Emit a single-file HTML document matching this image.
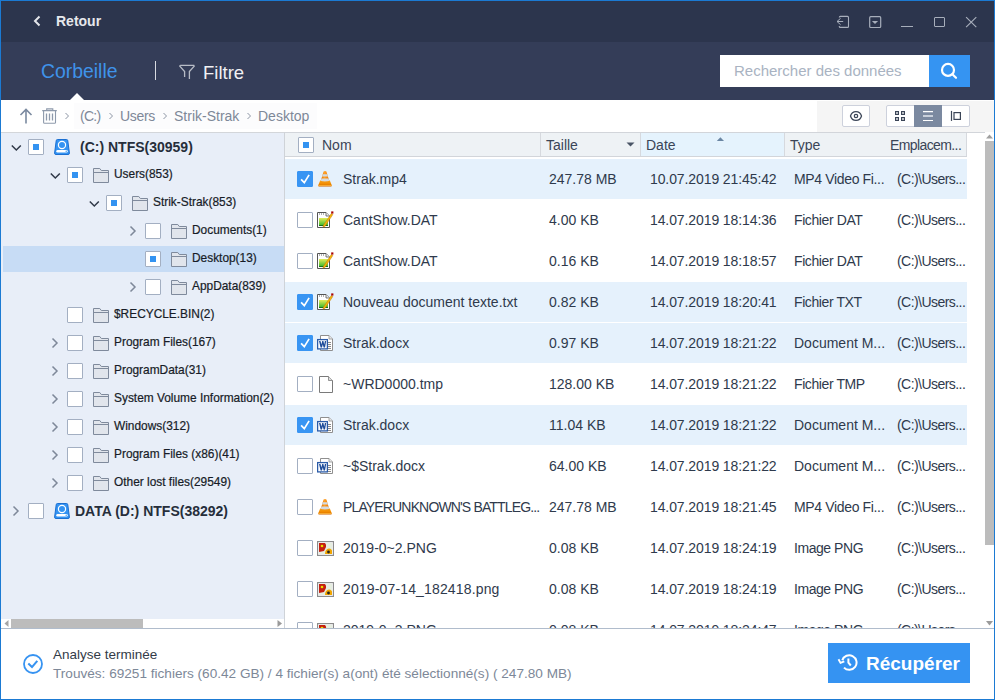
<!DOCTYPE html>
<html><head><meta charset="utf-8">
<style>
*{box-sizing:border-box;margin:0;padding:0}
html,body{width:995px;height:700px;overflow:hidden;background:#fff}
body{position:relative;font-family:"Liberation Sans",sans-serif;color:#333d4e}
.a{position:absolute}
.t{position:absolute;white-space:nowrap;line-height:1}
#win{position:absolute;left:0;top:0;width:995px;height:700px;border:1px solid #1b7ad3;pointer-events:none;z-index:50}
#title{left:0;top:0;width:995px;height:42px;background:#2c354d}
#bar2{left:0;top:42px;width:995px;height:58px;background:#343d58}
#crumb{left:0;top:100px;width:995px;height:32px;background:#fff}
#crumbR{left:817px;top:101px;width:178px;height:31px;background:#f5f5f5}
#crumbLine{left:0;top:132px;width:285px;height:1px;background:#d3d6da}
#left{left:0;top:133px;width:284px;height:486px;background:#e8eef8}
#leftBorder{left:284px;top:132px;width:1px;height:497px;background:#cfd3d8}
#hscroll{left:0;top:619px;width:284px;height:10px;background:#fff}
#bottomLine{left:0;top:628px;width:995px;height:1px;background:#b0bccc}
#status{left:0;top:629px;width:995px;height:71px;background:#fff}
.cb{position:absolute;width:16px;height:16px;border:1px solid #a3afc2;background:#fff;border-radius:1px}
.cb.p::after{content:"";position:absolute;left:4px;top:4px;width:6px;height:6px;background:#3393f1}
.cb.c{background:#3895f3;border-color:#3895f3}
.cb.c svg{position:absolute;left:0;top:0}
.tr{position:absolute;font-size:11.9px;color:#171c27;-webkit-text-stroke:0.2px #171c27}
.row{position:absolute;left:285px;width:682px;height:40px}
.row.s{background:#e5f1fc}
.cell{position:absolute;top:13px;font-size:14px;line-height:14px;white-space:nowrap;color:#2f3a4c}
</style></head><body>
<div id="win"></div>
<div class="a" id="title"></div>
<div class="a" id="bar2"></div>
<div class="a" id="crumb"></div>
<div class="a" id="crumbR"></div>
<div class="a" id="crumbLine"></div>
<div class="a" id="left"></div>
<div class="a" id="leftBorder"></div>
<div class="a" id="hscroll"></div>
<div class="a" id="bottomLine"></div>
<div class="a" id="status"></div>

<!-- TITLE -->
<svg class="a" style="left:33px;top:15px" width="9" height="12" viewBox="0 0 9 12"><path d="M6.5 1.5 L2 6 L6.5 10.5" fill="none" stroke="#e3e5ea" stroke-width="2"/></svg>
<div class="t" style="left:56px;top:14px;font-size:14px;font-weight:bold;color:#e6e8ec">Retour</div>


<!-- window controls -->
<svg class="a" style="left:835px;top:14px" width="16" height="16" viewBox="0 0 16 16" fill="none" stroke="#a7aebb" stroke-width="1.2">
<path d="M4.3 3.6 V3.4 Q4.3 2.4 5.3 2.4 H12.5 Q13.5 2.4 13.5 3.4 V12.4 Q13.5 13.4 12.5 13.4 H5.3 Q4.3 13.4 4.3 12.4 V12" stroke-width="1.1"/><path d="M2 7.5 H8.2 M5.6 4.3 L2 7.5 L5.6 10.7" stroke-width="1"/></svg>
<svg class="a" style="left:867px;top:14px" width="16" height="16" viewBox="0 0 16 16">
<rect x="2.7" y="2.7" width="11" height="10.8" rx="1" fill="none" stroke="#a7aebb" stroke-width="1.2"/><path d="M4.9 6.9 H11.1 L8 9.9Z" fill="#a7aebb"/></svg>
<div class="a" style="left:901px;top:26px;width:12px;height:1px;background:#a7aebb"></div>
<div class="a" style="left:934px;top:17px;width:10.5px;height:10px;border:1.2px solid #a7aebb;border-radius:1px"></div>
<svg class="a" style="left:964px;top:15px" width="14" height="14" viewBox="0 0 14 14"><path d="M2.1 2.1 L12.3 12.1 M12.3 2.1 L2.1 12.1" stroke="#a7aebb" stroke-width="1.15"/></svg>

<!-- bar2 -->
<div class="t" style="left:41px;top:62px;font-size:19.4px;color:#3f93ea">Corbeille</div>
<div class="a" style="left:155px;top:61px;width:1px;height:19px;background:#d7dae0"></div>
<svg class="a" style="left:178px;top:63px" width="18" height="18" viewBox="0 0 18 18" fill="none" stroke="#b7bcc6" stroke-width="1.3">
<path d="M2.2 2.4 H15.8 L16.2 3.2 L11.4 8.6 V16 M2.2 2.4 L1.8 3.2 L6.6 8.6 V14"/></svg>
<div class="t" style="left:203px;top:64px;font-size:18.5px;color:#f0f1f3">Filtre</div>
<svg class="a" style="left:70px;top:93px" width="14" height="7" viewBox="0 0 14 7"><path d="M0 7 L7 0 L14 7Z" fill="#fff"/></svg>

<!-- search -->
<div class="a" style="left:720px;top:55px;width:209px;height:32px;background:#fff"></div>
<div class="t" style="left:734px;top:63px;font-size:15px;color:#a9b3c2">Rechercher des données</div>
<div class="a" style="left:929px;top:55px;width:41px;height:32px;background:#3594f2"></div>
<svg class="a" style="left:938px;top:62px" width="22" height="22" viewBox="0 0 22 22" fill="none" stroke="#fff" stroke-width="2.2">
<circle cx="10" cy="7.9" r="6"/><path d="M14.4 12.3 L18 15.8" stroke-linecap="round"/></svg>

<!-- crumb -->
<svg class="a" style="left:18px;top:107px" width="16" height="18" viewBox="0 0 16 18" fill="none" stroke="#7b8aa0" stroke-width="1.6">
<path d="M8 2.5 V16.5 M2.5 8 L8 2.5 L13.5 8"/></svg>
<svg class="a" style="left:40px;top:106px" width="18" height="20" viewBox="0 0 18 20" fill="none" stroke="#8e9aac" stroke-width="1.1"><path d="M2.2 4.6 H16.8 M6.7 4.6 V2.9 H12.8 V4.6 M3.6 4.6 V16.4 Q3.6 17.3 4.5 17.3 H14.6 Q15.5 17.3 15.5 16.4 V4.6"/><path d="M6.5 7.4 V14.4 M9.5 7.4 V14.4 M12.5 7.4 V14.4" stroke-width="1.3"/></svg>
<svg class="a" style="left:63px;top:111px" width="8" height="10" viewBox="0 0 8 10"><path d="M2.5 2 L5.5 5 L2.5 8" fill="none" stroke="#8d96a5" stroke-width="1"/></svg>
<div class="a" style="left:74px;top:103px;width:243px;height:26px;background:#fcfcfd"></div>
<div class="t" style="left:80px;top:109px;font-size:14px;color:#7e8898;letter-spacing:-0.7px">(C:)</div>
<svg class="a" style="left:107px;top:111px" width="8" height="10" viewBox="0 0 8 10"><path d="M2.5 2 L5.5 5 L2.5 8" fill="none" stroke="#8d96a5" stroke-width="1"/></svg>
<div class="t" style="left:120px;top:109px;font-size:14px;color:#7e8898;letter-spacing:-0.3px">Users</div>
<svg class="a" style="left:161px;top:111px" width="8" height="10" viewBox="0 0 8 10"><path d="M2.5 2 L5.5 5 L2.5 8" fill="none" stroke="#8d96a5" stroke-width="1"/></svg>
<div class="t" style="left:174px;top:109px;font-size:14px;color:#7e8898">Strik-Strak</div>
<svg class="a" style="left:245px;top:111px" width="8" height="10" viewBox="0 0 8 10"><path d="M2.5 2 L5.5 5 L2.5 8" fill="none" stroke="#8d96a5" stroke-width="1"/></svg>
<div class="t" style="left:258px;top:109px;font-size:14px;color:#7e8898">Desktop</div>

<!-- view buttons -->
<div class="a" style="left:842px;top:105px;width:28px;height:22px;border:1px solid #cdd1dc;border-radius:2px;background:#fff"></div>
<svg class="a" style="left:848px;top:108px" width="16" height="16" viewBox="0 0 16 16" fill="none" stroke="#3b4557" stroke-width="1.25"><path d="M2.5 8 C3.4 4.8 5.4 3.6 8 3.6 C10.6 3.6 12.6 4.8 13.5 8 C12.6 11.2 10.6 12.4 8 12.4 C5.4 12.4 3.4 11.2 2.5 8Z"/><circle cx="8" cy="8" r="1.7"/></svg>
<div class="a" style="left:886px;top:105px;width:84px;height:22px;border:1px solid #cdd1dc;border-radius:2px;background:#fff"></div>
<div class="a" style="left:914px;top:105px;width:28px;height:22px;background:#7b89a0"></div>
<svg class="a" style="left:892px;top:108px" width="16" height="16" viewBox="0 0 16 16" fill="none" stroke="#3b4557" stroke-width="1.2">
<rect x="3.6" y="3.6" width="2.8" height="2.8"/><rect x="9.6" y="3.6" width="2.8" height="2.8"/><rect x="3.6" y="9.6" width="2.8" height="2.8"/><rect x="9.6" y="9.6" width="2.8" height="2.8"/></svg>
<svg class="a" style="left:920px;top:108px" width="16" height="16" viewBox="0 0 16 16">
<path d="M3 3.6 H13 M3 12.5 H13" stroke="#fff" stroke-width="1.2"/><path d="M3 8 H13" stroke="#c9d0db" stroke-width="2"/></svg>
<svg class="a" style="left:948px;top:108px" width="16" height="16" viewBox="0 0 16 16" fill="none" stroke="#3b4557" stroke-width="1.3">
<path d="M3.5 2.9 V12.9" stroke-width="1.2"/><rect x="6" y="4.6" width="6.4" height="6.8" stroke-width="1.2"/></svg>
<!-- TREE -->
<div class="a" style="left:3px;top:246px;width:281px;height:26px;background:#c7dcf5"></div>
<svg class="a" style="left:10px;top:143px" width="12" height="9" viewBox="0 0 12 9"><path d="M1.8 2.5 L6.3 7 L10.8 2.5" fill="none" stroke="#2f3847" stroke-width="1.5"/></svg>
<div class="cb p" style="left:28px;top:139px"></div>
<svg class="a" style="left:54px;top:139px" width="16" height="16" viewBox="0 0 16 16"><path d="M2.2 1.8 Q2.3 0.5 3.5 0.5 H12.5 Q13.7 0.5 13.8 1.8 L15.4 14 Q15.5 15.5 14 15.5 H2 Q0.5 15.5 0.6 14Z" fill="#3493f2" stroke="#1b6fd1" stroke-width="1"/><circle cx="8" cy="6" r="3.6" fill="none" stroke="#fff" stroke-width="1.2"/><rect x="2.3" y="11" width="11.4" height="2.6" rx="1.3" fill="#fff"/><circle cx="12.2" cy="12.3" r="0.7" fill="#3493f2"/></svg>
<div class="t" style="left:80px;top:140px;font-size:14px;font-weight:bold;color:#262e3b">(C:) NTFS(30959)</div>
<svg class="a" style="left:49px;top:171px" width="12" height="9" viewBox="0 0 12 9"><path d="M1.8 2.5 L6.3 7 L10.8 2.5" fill="none" stroke="#2f3847" stroke-width="1.5"/></svg>
<div class="cb p" style="left:67px;top:167px"></div>
<svg class="a" style="left:93px;top:168px" width="16" height="15" viewBox="0 0 16 15"><path d="M0.5 14.5 V0.5 H6.8 L8.3 2.5 H15.5 V14.5Z" fill="#e1e5ec" stroke="#7f8a9c" stroke-width="1"/><path d="M0.5 4.5 H15.5" stroke="#7f8a9c" stroke-width="1"/></svg>
<div class="t tr" style="left:114px;top:169px">Users(853)</div>
<svg class="a" style="left:88px;top:199px" width="12" height="9" viewBox="0 0 12 9"><path d="M1.8 2.5 L6.3 7 L10.8 2.5" fill="none" stroke="#2f3847" stroke-width="1.5"/></svg>
<div class="cb p" style="left:106px;top:195px"></div>
<svg class="a" style="left:132px;top:196px" width="16" height="15" viewBox="0 0 16 15"><path d="M0.5 14.5 V0.5 H6.8 L8.3 2.5 H15.5 V14.5Z" fill="#e1e5ec" stroke="#7f8a9c" stroke-width="1"/><path d="M0.5 4.5 H15.5" stroke="#7f8a9c" stroke-width="1"/></svg>
<div class="t tr" style="left:153px;top:197px">Strik-Strak(853)</div>
<svg class="a" style="left:129px;top:225px" width="8" height="12" viewBox="0 0 8 12"><path d="M1.5 1.5 L6 6 L1.5 10.5" fill="none" stroke="#7e8899" stroke-width="1.5"/></svg>
<div class="cb" style="left:145px;top:223px"></div>
<svg class="a" style="left:171px;top:224px" width="16" height="15" viewBox="0 0 16 15"><path d="M0.5 14.5 V0.5 H6.8 L8.3 2.5 H15.5 V14.5Z" fill="#e1e5ec" stroke="#7f8a9c" stroke-width="1"/><path d="M0.5 4.5 H15.5" stroke="#7f8a9c" stroke-width="1"/></svg>
<div class="t tr" style="left:192px;top:225px">Documents(1)</div>
<div class="cb p" style="left:145px;top:251px"></div>
<svg class="a" style="left:171px;top:252px" width="16" height="15" viewBox="0 0 16 15"><path d="M0.5 14.5 V0.5 H6.8 L8.3 2.5 H15.5 V14.5Z" fill="#e1e5ec" stroke="#7f8a9c" stroke-width="1"/><path d="M0.5 4.5 H15.5" stroke="#7f8a9c" stroke-width="1"/></svg>
<div class="t tr" style="left:192px;top:253px">Desktop(13)</div>
<svg class="a" style="left:129px;top:281px" width="8" height="12" viewBox="0 0 8 12"><path d="M1.5 1.5 L6 6 L1.5 10.5" fill="none" stroke="#7e8899" stroke-width="1.5"/></svg>
<div class="cb" style="left:145px;top:279px"></div>
<svg class="a" style="left:171px;top:280px" width="16" height="15" viewBox="0 0 16 15"><path d="M0.5 14.5 V0.5 H6.8 L8.3 2.5 H15.5 V14.5Z" fill="#e1e5ec" stroke="#7f8a9c" stroke-width="1"/><path d="M0.5 4.5 H15.5" stroke="#7f8a9c" stroke-width="1"/></svg>
<div class="t tr" style="left:192px;top:281px">AppData(839)</div>
<div class="cb" style="left:67px;top:307px"></div>
<svg class="a" style="left:93px;top:308px" width="16" height="15" viewBox="0 0 16 15"><path d="M0.5 14.5 V0.5 H6.8 L8.3 2.5 H15.5 V14.5Z" fill="#e1e5ec" stroke="#7f8a9c" stroke-width="1"/><path d="M0.5 4.5 H15.5" stroke="#7f8a9c" stroke-width="1"/></svg>
<div class="t tr" style="left:114px;top:309px">$RECYCLE.BIN(2)</div>
<svg class="a" style="left:51px;top:337px" width="8" height="12" viewBox="0 0 8 12"><path d="M1.5 1.5 L6 6 L1.5 10.5" fill="none" stroke="#7e8899" stroke-width="1.5"/></svg>
<div class="cb" style="left:67px;top:335px"></div>
<svg class="a" style="left:93px;top:336px" width="16" height="15" viewBox="0 0 16 15"><path d="M0.5 14.5 V0.5 H6.8 L8.3 2.5 H15.5 V14.5Z" fill="#e1e5ec" stroke="#7f8a9c" stroke-width="1"/><path d="M0.5 4.5 H15.5" stroke="#7f8a9c" stroke-width="1"/></svg>
<div class="t tr" style="left:114px;top:337px">Program Files(167)</div>
<svg class="a" style="left:51px;top:365px" width="8" height="12" viewBox="0 0 8 12"><path d="M1.5 1.5 L6 6 L1.5 10.5" fill="none" stroke="#7e8899" stroke-width="1.5"/></svg>
<div class="cb" style="left:67px;top:363px"></div>
<svg class="a" style="left:93px;top:364px" width="16" height="15" viewBox="0 0 16 15"><path d="M0.5 14.5 V0.5 H6.8 L8.3 2.5 H15.5 V14.5Z" fill="#e1e5ec" stroke="#7f8a9c" stroke-width="1"/><path d="M0.5 4.5 H15.5" stroke="#7f8a9c" stroke-width="1"/></svg>
<div class="t tr" style="left:114px;top:365px">ProgramData(31)</div>
<svg class="a" style="left:51px;top:393px" width="8" height="12" viewBox="0 0 8 12"><path d="M1.5 1.5 L6 6 L1.5 10.5" fill="none" stroke="#7e8899" stroke-width="1.5"/></svg>
<div class="cb" style="left:67px;top:391px"></div>
<svg class="a" style="left:93px;top:392px" width="16" height="15" viewBox="0 0 16 15"><path d="M0.5 14.5 V0.5 H6.8 L8.3 2.5 H15.5 V14.5Z" fill="#e1e5ec" stroke="#7f8a9c" stroke-width="1"/><path d="M0.5 4.5 H15.5" stroke="#7f8a9c" stroke-width="1"/></svg>
<div class="t tr" style="left:114px;top:393px">System Volume Information(2)</div>
<svg class="a" style="left:51px;top:421px" width="8" height="12" viewBox="0 0 8 12"><path d="M1.5 1.5 L6 6 L1.5 10.5" fill="none" stroke="#7e8899" stroke-width="1.5"/></svg>
<div class="cb" style="left:67px;top:419px"></div>
<svg class="a" style="left:93px;top:420px" width="16" height="15" viewBox="0 0 16 15"><path d="M0.5 14.5 V0.5 H6.8 L8.3 2.5 H15.5 V14.5Z" fill="#e1e5ec" stroke="#7f8a9c" stroke-width="1"/><path d="M0.5 4.5 H15.5" stroke="#7f8a9c" stroke-width="1"/></svg>
<div class="t tr" style="left:114px;top:421px">Windows(312)</div>
<svg class="a" style="left:51px;top:449px" width="8" height="12" viewBox="0 0 8 12"><path d="M1.5 1.5 L6 6 L1.5 10.5" fill="none" stroke="#7e8899" stroke-width="1.5"/></svg>
<div class="cb" style="left:67px;top:447px"></div>
<svg class="a" style="left:93px;top:448px" width="16" height="15" viewBox="0 0 16 15"><path d="M0.5 14.5 V0.5 H6.8 L8.3 2.5 H15.5 V14.5Z" fill="#e1e5ec" stroke="#7f8a9c" stroke-width="1"/><path d="M0.5 4.5 H15.5" stroke="#7f8a9c" stroke-width="1"/></svg>
<div class="t tr" style="left:114px;top:449px">Program Files (x86)(41)</div>
<svg class="a" style="left:51px;top:477px" width="8" height="12" viewBox="0 0 8 12"><path d="M1.5 1.5 L6 6 L1.5 10.5" fill="none" stroke="#7e8899" stroke-width="1.5"/></svg>
<div class="cb" style="left:67px;top:475px"></div>
<svg class="a" style="left:93px;top:476px" width="16" height="15" viewBox="0 0 16 15"><path d="M0.5 14.5 V0.5 H6.8 L8.3 2.5 H15.5 V14.5Z" fill="#e1e5ec" stroke="#7f8a9c" stroke-width="1"/><path d="M0.5 4.5 H15.5" stroke="#7f8a9c" stroke-width="1"/></svg>
<div class="t tr" style="left:114px;top:477px">Other lost files(29549)</div>
<svg class="a" style="left:12px;top:505px" width="8" height="12" viewBox="0 0 8 12"><path d="M1.5 1.5 L6 6 L1.5 10.5" fill="none" stroke="#7e8899" stroke-width="1.5"/></svg>
<div class="cb" style="left:28px;top:503px"></div>
<svg class="a" style="left:54px;top:503px" width="16" height="16" viewBox="0 0 16 16"><path d="M2.2 1.8 Q2.3 0.5 3.5 0.5 H12.5 Q13.7 0.5 13.8 1.8 L15.4 14 Q15.5 15.5 14 15.5 H2 Q0.5 15.5 0.6 14Z" fill="#3493f2" stroke="#1b6fd1" stroke-width="1"/><circle cx="8" cy="6" r="3.6" fill="none" stroke="#fff" stroke-width="1.2"/><rect x="2.3" y="11" width="11.4" height="2.6" rx="1.3" fill="#fff"/><circle cx="12.2" cy="12.3" r="0.7" fill="#3493f2"/></svg>
<div class="t" style="left:75px;top:504px;font-size:14px;font-weight:bold;color:#262e3b">DATA (D:) NTFS(38292)</div>
<!-- LIST -->
<div class="a" style="left:285px;top:133px;width:700px;height:495px;overflow:hidden">
<div style="position:absolute;left:-285px;top:-133px;width:995px;height:700px">
<div class="a" style="left:285px;top:132px;width:700px;height:1px;background:#d2d5da"></div>
<div class="a" style="left:285px;top:133px;width:682px;height:23px;background:#eef2f5"></div>
<div class="a" style="left:641px;top:133px;width:143px;height:23px;background:#e5f3fd"></div>
<div class="a" style="left:285px;top:156px;width:682px;height:1px;background:#d2d5da"></div>
<div class="a" style="left:540px;top:133px;width:1px;height:23px;background:#d6d9de"></div>
<div class="a" style="left:640px;top:133px;width:1px;height:23px;background:#d6d9de"></div>
<div class="a" style="left:784px;top:133px;width:1px;height:23px;background:#d6d9de"></div>
<div class="a" style="left:966px;top:133px;width:1px;height:23px;background:#d6d9de"></div>
<div class="cb p" style="left:298px;top:137px"></div>
<div class="t" style="left:322px;top:138px;font-size:14px;color:#3a4557;letter-spacing:0px">Nom</div>
<div class="t" style="left:546px;top:138px;font-size:14px;color:#3a4557;letter-spacing:0px">Taille</div>
<div class="t" style="left:646px;top:138px;font-size:14px;color:#3a4557;letter-spacing:0px">Date</div>
<div class="t" style="left:790px;top:138px;font-size:14px;color:#3a4557;letter-spacing:0px">Type</div>
<div class="t" style="left:890px;top:138px;font-size:14px;color:#3a4557;letter-spacing:-0.6px">Emplacem...</div>
<svg class="a" style="left:626px;top:142px" width="9" height="5" viewBox="0 0 9 5"><path d="M0.5 0.5 H8.5 L4.5 4.5Z" fill="#4a5566"/></svg>
<svg class="a" style="left:715px;top:136px" width="11" height="6" viewBox="0 0 11 6"><path d="M1.8 5 L5.4 1.2 L9 5Z" fill="#6a86a3"/></svg>
<div class="a" style="left:285px;top:159px;width:682px;height:40px;background:#e5f1fc"></div>
<div class="cb c" style="left:297px;top:171px"><svg width="16" height="16" viewBox="0 0 16 16"><path d="M3.1 7.4 L6.3 10.7 L11.1 2.9" fill="none" stroke="#fff" stroke-width="1.7"/></svg></div>
<svg class="a" style="left:317px;top:170px" width="16" height="18" viewBox="0 0 16 18"><defs><linearGradient id="vo0" x1="0" y1="0" x2="1" y2="0"><stop offset="0" stop-color="#e06a00"/><stop offset="0.45" stop-color="#ffa126"/><stop offset="1" stop-color="#e87000"/></linearGradient><linearGradient id="vb0" x1="0" y1="0" x2="0" y2="1"><stop offset="0" stop-color="#f7a21b"/><stop offset="0.6" stop-color="#f08a00"/><stop offset="1" stop-color="#c95a00"/></linearGradient></defs><path d="M6.6 1.5 Q8 0.5 9.4 1.5 L12.6 12 H3.4Z" fill="url(#vo0)"/><path d="M5.78 4.2 H10.22 L10.9 6.4 H5.1Z" fill="#d3dbe3"/><path d="M4.44 8.6 H11.56 L12.42 11.4 H3.58Z" fill="#d3dbe3"/><path d="M3.2 10.4 Q8 13 12.8 10.4 L14.8 15.2 Q15 16.6 13.8 16.6 H2.2 Q1 16.6 1.2 15.2Z" fill="url(#vb0)"/><path d="M1.4 15.6 H14.6" stroke="#ffc24a" stroke-width="0.8"/></svg>
<div class="t" style="left:343px;top:172px;font-size:14px;color:#2f3a4c;letter-spacing:0px">Strak.mp4</div>
<div class="t" style="left:549px;top:172px;font-size:14px;color:#2f3a4c">247.78 MB</div>
<div class="t" style="left:650px;top:172px;font-size:14px;color:#2f3a4c;letter-spacing:-0.1px">10.07.2019 21:45:42</div>
<div class="t" style="left:794px;top:172px;font-size:14px;color:#2f3a4c;letter-spacing:-0.35px">MP4 Video Fi...</div>
<div class="t" style="left:897px;top:172px;font-size:14px;color:#2f3a4c;letter-spacing:-0.55px">(C:)\Users...</div>
<div class="cb" style="left:297px;top:212px"></div>
<svg class="a" style="left:317px;top:211px" width="17" height="17" viewBox="0 0 17 17"><defs><linearGradient id="ng1" x1="0" y1="0" x2="0" y2="1"><stop offset="0" stop-color="#e4ec5a"/><stop offset="1" stop-color="#2fb52a"/></linearGradient></defs><path d="M0.5 1.5 H9 L12.5 5 V16.5 H0.5Z" fill="#fff" stroke="#555" stroke-width="1"/><path d="M9 1.5 V5 H12.5" fill="#eee" stroke="#555" stroke-width="0.8"/><path d="M2 3 h1 M4 3 h1 M6 3 h1" stroke="#666" stroke-width="1"/><rect x="2" y="7" width="9" height="8" fill="url(#ng1)"/><path d="M2 14.5 H11" stroke="#1a6e1a" stroke-width="1"/><path d="M6.3 14.6 L14.3 2.6 L15.8 3.6 L7.8 15.6 L6 16Z" fill="#f5b40a" stroke="#c27a00" stroke-width="0.5"/><rect x="14.2" y="0.4" width="2.2" height="2.2" fill="#a00"/></svg>
<div class="t" style="left:343px;top:213px;font-size:14px;color:#2f3a4c;letter-spacing:0px">CantShow.DAT</div>
<div class="t" style="left:549px;top:213px;font-size:14px;color:#2f3a4c">4.00 KB</div>
<div class="t" style="left:650px;top:213px;font-size:14px;color:#2f3a4c;letter-spacing:-0.1px">14.07.2019 18:14:36</div>
<div class="t" style="left:794px;top:213px;font-size:14px;color:#2f3a4c;letter-spacing:-0.4px">Fichier DAT</div>
<div class="t" style="left:897px;top:213px;font-size:14px;color:#2f3a4c;letter-spacing:-0.55px">(C:)\Users...</div>
<div class="cb" style="left:297px;top:253px"></div>
<svg class="a" style="left:317px;top:252px" width="17" height="17" viewBox="0 0 17 17"><defs><linearGradient id="ng2" x1="0" y1="0" x2="0" y2="1"><stop offset="0" stop-color="#e4ec5a"/><stop offset="1" stop-color="#2fb52a"/></linearGradient></defs><path d="M0.5 1.5 H9 L12.5 5 V16.5 H0.5Z" fill="#fff" stroke="#555" stroke-width="1"/><path d="M9 1.5 V5 H12.5" fill="#eee" stroke="#555" stroke-width="0.8"/><path d="M2 3 h1 M4 3 h1 M6 3 h1" stroke="#666" stroke-width="1"/><rect x="2" y="7" width="9" height="8" fill="url(#ng2)"/><path d="M2 14.5 H11" stroke="#1a6e1a" stroke-width="1"/><path d="M6.3 14.6 L14.3 2.6 L15.8 3.6 L7.8 15.6 L6 16Z" fill="#f5b40a" stroke="#c27a00" stroke-width="0.5"/><rect x="14.2" y="0.4" width="2.2" height="2.2" fill="#a00"/></svg>
<div class="t" style="left:343px;top:254px;font-size:14px;color:#2f3a4c;letter-spacing:0px">CantShow.DAT</div>
<div class="t" style="left:549px;top:254px;font-size:14px;color:#2f3a4c">0.16 KB</div>
<div class="t" style="left:650px;top:254px;font-size:14px;color:#2f3a4c;letter-spacing:-0.1px">14.07.2019 18:18:57</div>
<div class="t" style="left:794px;top:254px;font-size:14px;color:#2f3a4c;letter-spacing:-0.4px">Fichier DAT</div>
<div class="t" style="left:897px;top:254px;font-size:14px;color:#2f3a4c;letter-spacing:-0.55px">(C:)\Users...</div>
<div class="a" style="left:285px;top:282px;width:682px;height:40px;background:#e5f1fc"></div>
<div class="cb c" style="left:297px;top:294px"><svg width="16" height="16" viewBox="0 0 16 16"><path d="M3.1 7.4 L6.3 10.7 L11.1 2.9" fill="none" stroke="#fff" stroke-width="1.7"/></svg></div>
<svg class="a" style="left:317px;top:293px" width="17" height="17" viewBox="0 0 17 17"><defs><linearGradient id="ng3" x1="0" y1="0" x2="0" y2="1"><stop offset="0" stop-color="#e4ec5a"/><stop offset="1" stop-color="#2fb52a"/></linearGradient></defs><path d="M0.5 1.5 H9 L12.5 5 V16.5 H0.5Z" fill="#fff" stroke="#555" stroke-width="1"/><path d="M9 1.5 V5 H12.5" fill="#eee" stroke="#555" stroke-width="0.8"/><path d="M2 3 h1 M4 3 h1 M6 3 h1" stroke="#666" stroke-width="1"/><rect x="2" y="7" width="9" height="8" fill="url(#ng3)"/><path d="M2 14.5 H11" stroke="#1a6e1a" stroke-width="1"/><path d="M6.3 14.6 L14.3 2.6 L15.8 3.6 L7.8 15.6 L6 16Z" fill="#f5b40a" stroke="#c27a00" stroke-width="0.5"/><rect x="14.2" y="0.4" width="2.2" height="2.2" fill="#a00"/></svg>
<div class="t" style="left:343px;top:295px;font-size:14px;color:#2f3a4c;letter-spacing:0px">Nouveau document texte.txt</div>
<div class="t" style="left:549px;top:295px;font-size:14px;color:#2f3a4c">0.82 KB</div>
<div class="t" style="left:650px;top:295px;font-size:14px;color:#2f3a4c;letter-spacing:-0.1px">14.07.2019 18:20:41</div>
<div class="t" style="left:794px;top:295px;font-size:14px;color:#2f3a4c;letter-spacing:-0.4px">Fichier TXT</div>
<div class="t" style="left:897px;top:295px;font-size:14px;color:#2f3a4c;letter-spacing:-0.55px">(C:)\Users...</div>
<div class="a" style="left:285px;top:323px;width:682px;height:40px;background:#e5f1fc"></div>
<div class="cb c" style="left:297px;top:335px"><svg width="16" height="16" viewBox="0 0 16 16"><path d="M3.1 7.4 L6.3 10.7 L11.1 2.9" fill="none" stroke="#fff" stroke-width="1.7"/></svg></div>
<svg class="a" style="left:317px;top:334px" width="17" height="18" viewBox="0 0 17 18"><path d="M3.5 1.5 H12 L15.5 5 V16.5 H3.5Z" fill="#fff" stroke="#8f8f8f" stroke-width="1"/><path d="M12 1.5 V5 H15.5" fill="#e8e8e8" stroke="#8f8f8f" stroke-width="0.8"/><path d="M11 8.5 h3 M11 10.5 h3 M11 12.5 h3 M11 14.5 h3" stroke="#8a8a8a" stroke-width="1"/><rect x="0.6" y="5.6" width="9.8" height="9.3" fill="#fff" stroke="#2a5ba8" stroke-width="1.3"/><path d="M2 7 L3.6 13.6 H5 L5.8 10.2 L6.6 13.6 H8 L9.2 7 H7.9 L7.2 10.6 L6.4 7 H5.2 L4.4 10.6 L3.5 7Z" fill="#1f4d9a"/></svg>
<div class="t" style="left:343px;top:336px;font-size:14px;color:#2f3a4c;letter-spacing:0px">Strak.docx</div>
<div class="t" style="left:549px;top:336px;font-size:14px;color:#2f3a4c">0.97 KB</div>
<div class="t" style="left:650px;top:336px;font-size:14px;color:#2f3a4c;letter-spacing:-0.1px">14.07.2019 18:21:22</div>
<div class="t" style="left:794px;top:336px;font-size:14px;color:#2f3a4c;letter-spacing:0px">Document M...</div>
<div class="t" style="left:897px;top:336px;font-size:14px;color:#2f3a4c;letter-spacing:-0.55px">(C:)\Users...</div>
<div class="cb" style="left:297px;top:376px"></div>
<svg class="a" style="left:319px;top:376px" width="14" height="17" viewBox="0 0 14 17"><path d="M0.5 0.5 H9.5 L13.5 4.5 V16.5 H0.5Z" fill="#fff" stroke="#7a7a7a" stroke-width="1"/><path d="M9.5 0.5 V4.5 H13.5" fill="#ddd" stroke="#7a7a7a" stroke-width="0.8"/></svg>
<div class="t" style="left:343px;top:377px;font-size:14px;color:#2f3a4c;letter-spacing:0px">~WRD0000.tmp</div>
<div class="t" style="left:549px;top:377px;font-size:14px;color:#2f3a4c">128.00 KB</div>
<div class="t" style="left:650px;top:377px;font-size:14px;color:#2f3a4c;letter-spacing:-0.1px">14.07.2019 18:21:22</div>
<div class="t" style="left:794px;top:377px;font-size:14px;color:#2f3a4c;letter-spacing:-0.4px">Fichier TMP</div>
<div class="t" style="left:897px;top:377px;font-size:14px;color:#2f3a4c;letter-spacing:-0.55px">(C:)\Users...</div>
<div class="a" style="left:285px;top:405px;width:682px;height:40px;background:#e5f1fc"></div>
<div class="cb c" style="left:297px;top:417px"><svg width="16" height="16" viewBox="0 0 16 16"><path d="M3.1 7.4 L6.3 10.7 L11.1 2.9" fill="none" stroke="#fff" stroke-width="1.7"/></svg></div>
<svg class="a" style="left:317px;top:416px" width="17" height="18" viewBox="0 0 17 18"><path d="M3.5 1.5 H12 L15.5 5 V16.5 H3.5Z" fill="#fff" stroke="#8f8f8f" stroke-width="1"/><path d="M12 1.5 V5 H15.5" fill="#e8e8e8" stroke="#8f8f8f" stroke-width="0.8"/><path d="M11 8.5 h3 M11 10.5 h3 M11 12.5 h3 M11 14.5 h3" stroke="#8a8a8a" stroke-width="1"/><rect x="0.6" y="5.6" width="9.8" height="9.3" fill="#fff" stroke="#2a5ba8" stroke-width="1.3"/><path d="M2 7 L3.6 13.6 H5 L5.8 10.2 L6.6 13.6 H8 L9.2 7 H7.9 L7.2 10.6 L6.4 7 H5.2 L4.4 10.6 L3.5 7Z" fill="#1f4d9a"/></svg>
<div class="t" style="left:343px;top:418px;font-size:14px;color:#2f3a4c;letter-spacing:0px">Strak.docx</div>
<div class="t" style="left:549px;top:418px;font-size:14px;color:#2f3a4c">11.04 KB</div>
<div class="t" style="left:650px;top:418px;font-size:14px;color:#2f3a4c;letter-spacing:-0.1px">14.07.2019 18:21:22</div>
<div class="t" style="left:794px;top:418px;font-size:14px;color:#2f3a4c;letter-spacing:0px">Document M...</div>
<div class="t" style="left:897px;top:418px;font-size:14px;color:#2f3a4c;letter-spacing:-0.55px">(C:)\Users...</div>
<div class="cb" style="left:297px;top:458px"></div>
<svg class="a" style="left:317px;top:457px" width="17" height="18" viewBox="0 0 17 18"><path d="M3.5 1.5 H12 L15.5 5 V16.5 H3.5Z" fill="#fff" stroke="#8f8f8f" stroke-width="1"/><path d="M12 1.5 V5 H15.5" fill="#e8e8e8" stroke="#8f8f8f" stroke-width="0.8"/><path d="M11 8.5 h3 M11 10.5 h3 M11 12.5 h3 M11 14.5 h3" stroke="#8a8a8a" stroke-width="1"/><rect x="0.6" y="5.6" width="9.8" height="9.3" fill="#fff" stroke="#2a5ba8" stroke-width="1.3"/><path d="M2 7 L3.6 13.6 H5 L5.8 10.2 L6.6 13.6 H8 L9.2 7 H7.9 L7.2 10.6 L6.4 7 H5.2 L4.4 10.6 L3.5 7Z" fill="#1f4d9a"/></svg>
<div class="t" style="left:343px;top:459px;font-size:14px;color:#2f3a4c;letter-spacing:0px">~$Strak.docx</div>
<div class="t" style="left:549px;top:459px;font-size:14px;color:#2f3a4c">64.00 KB</div>
<div class="t" style="left:650px;top:459px;font-size:14px;color:#2f3a4c;letter-spacing:-0.1px">14.07.2019 18:21:22</div>
<div class="t" style="left:794px;top:459px;font-size:14px;color:#2f3a4c;letter-spacing:0px">Document M...</div>
<div class="t" style="left:897px;top:459px;font-size:14px;color:#2f3a4c;letter-spacing:-0.55px">(C:)\Users...</div>
<div class="cb" style="left:297px;top:499px"></div>
<svg class="a" style="left:317px;top:498px" width="16" height="18" viewBox="0 0 16 18"><defs><linearGradient id="vo8" x1="0" y1="0" x2="1" y2="0"><stop offset="0" stop-color="#e06a00"/><stop offset="0.45" stop-color="#ffa126"/><stop offset="1" stop-color="#e87000"/></linearGradient><linearGradient id="vb8" x1="0" y1="0" x2="0" y2="1"><stop offset="0" stop-color="#f7a21b"/><stop offset="0.6" stop-color="#f08a00"/><stop offset="1" stop-color="#c95a00"/></linearGradient></defs><path d="M6.6 1.5 Q8 0.5 9.4 1.5 L12.6 12 H3.4Z" fill="url(#vo8)"/><path d="M5.78 4.2 H10.22 L10.9 6.4 H5.1Z" fill="#d3dbe3"/><path d="M4.44 8.6 H11.56 L12.42 11.4 H3.58Z" fill="#d3dbe3"/><path d="M3.2 10.4 Q8 13 12.8 10.4 L14.8 15.2 Q15 16.6 13.8 16.6 H2.2 Q1 16.6 1.2 15.2Z" fill="url(#vb8)"/><path d="M1.4 15.6 H14.6" stroke="#ffc24a" stroke-width="0.8"/></svg>
<div class="t" style="left:343px;top:500px;font-size:14px;color:#2f3a4c;letter-spacing:-0.85px">PLAYERUNKNOWN'S BATTLEG...</div>
<div class="t" style="left:549px;top:500px;font-size:14px;color:#2f3a4c">247.78 MB</div>
<div class="t" style="left:650px;top:500px;font-size:14px;color:#2f3a4c;letter-spacing:-0.1px">14.07.2019 18:21:45</div>
<div class="t" style="left:794px;top:500px;font-size:14px;color:#2f3a4c;letter-spacing:-0.35px">MP4 Video Fi...</div>
<div class="t" style="left:897px;top:500px;font-size:14px;color:#2f3a4c;letter-spacing:-0.55px">(C:)\Users...</div>
<div class="cb" style="left:297px;top:540px"></div>
<svg class="a" style="left:317px;top:541px" width="17" height="15" viewBox="0 0 17 15"><rect x="0.5" y="0.5" width="16" height="14" fill="#f4f4f4" stroke="#8c8c8c" stroke-width="1.2"/><rect x="2" y="2" width="13" height="11" fill="#e6eee0"/><path d="M2 2 H8 Q9.5 3.5 9 6 L7 10 L2 11Z" fill="#c42010"/><circle cx="5" cy="5" r="1.3" fill="#e8e000"/><path d="M8 13 Q8 8 12 7.5 Q15 8 15 10 V13Z" fill="#f1a500"/><circle cx="11.5" cy="11" r="1.4" fill="#222"/></svg>
<div class="t" style="left:343px;top:541px;font-size:14px;color:#2f3a4c;letter-spacing:0px">2019-0~2.PNG</div>
<div class="t" style="left:549px;top:541px;font-size:14px;color:#2f3a4c">0.08 KB</div>
<div class="t" style="left:650px;top:541px;font-size:14px;color:#2f3a4c;letter-spacing:-0.1px">14.07.2019 18:24:19</div>
<div class="t" style="left:794px;top:541px;font-size:14px;color:#2f3a4c;letter-spacing:-0.45px">Image PNG</div>
<div class="t" style="left:897px;top:541px;font-size:14px;color:#2f3a4c;letter-spacing:-0.55px">(C:)\Users...</div>
<div class="cb" style="left:297px;top:581px"></div>
<svg class="a" style="left:317px;top:582px" width="17" height="15" viewBox="0 0 17 15"><rect x="0.5" y="0.5" width="16" height="14" fill="#f4f4f4" stroke="#8c8c8c" stroke-width="1.2"/><rect x="2" y="2" width="13" height="11" fill="#e6eee0"/><path d="M2 2 H8 Q9.5 3.5 9 6 L7 10 L2 11Z" fill="#c42010"/><circle cx="5" cy="5" r="1.3" fill="#e8e000"/><path d="M8 13 Q8 8 12 7.5 Q15 8 15 10 V13Z" fill="#f1a500"/><circle cx="11.5" cy="11" r="1.4" fill="#222"/></svg>
<div class="t" style="left:343px;top:582px;font-size:14px;color:#2f3a4c;letter-spacing:0.15px">2019-07-14_182418.png</div>
<div class="t" style="left:549px;top:582px;font-size:14px;color:#2f3a4c">0.08 KB</div>
<div class="t" style="left:650px;top:582px;font-size:14px;color:#2f3a4c;letter-spacing:-0.1px">14.07.2019 18:24:19</div>
<div class="t" style="left:794px;top:582px;font-size:14px;color:#2f3a4c;letter-spacing:-0.45px">Image PNG</div>
<div class="t" style="left:897px;top:582px;font-size:14px;color:#2f3a4c;letter-spacing:-0.55px">(C:)\Users...</div>
<div class="cb" style="left:297px;top:622px"></div>
<svg class="a" style="left:317px;top:623px" width="17" height="15" viewBox="0 0 17 15"><rect x="0.5" y="0.5" width="16" height="14" fill="#f4f4f4" stroke="#8c8c8c" stroke-width="1.2"/><rect x="2" y="2" width="13" height="11" fill="#e6eee0"/><path d="M2 2 H8 Q9.5 3.5 9 6 L7 10 L2 11Z" fill="#c42010"/><circle cx="5" cy="5" r="1.3" fill="#e8e000"/><path d="M8 13 Q8 8 12 7.5 Q15 8 15 10 V13Z" fill="#f1a500"/><circle cx="11.5" cy="11" r="1.4" fill="#222"/></svg>
<div class="t" style="left:343px;top:623px;font-size:14px;color:#2f3a4c;letter-spacing:0px">2019-0~3.PNG</div>
<div class="t" style="left:549px;top:623px;font-size:14px;color:#2f3a4c">0.08 KB</div>
<div class="t" style="left:650px;top:623px;font-size:14px;color:#2f3a4c;letter-spacing:-0.1px">14.07.2019 18:24:47</div>
<div class="t" style="left:794px;top:623px;font-size:14px;color:#2f3a4c;letter-spacing:-0.45px">Image PNG</div>
<div class="t" style="left:897px;top:623px;font-size:14px;color:#2f3a4c;letter-spacing:-0.55px">(C:)\Users...</div>
</div></div>
<div class="a" style="left:285px;top:132px;width:700px;height:1px;background:#d2d5da"></div>
<svg class="a" style="left:985px;top:133px" width="9" height="7" viewBox="0 0 9 7"><path d="M1 5.6 L4.5 1.6 L8 5.6Z" fill="#a0a0a0"/></svg>
<div class="a" style="left:985px;top:141px;width:9px;height:404px;background:#bcbcbc"></div>
<svg class="a" style="left:985px;top:620px" width="9" height="7" viewBox="0 0 9 7"><path d="M1 1 L4.5 5.5 L8 1Z" fill="#9a9a9a"/></svg>
<div class="a" style="left:11px;top:619px;width:132px;height:9px;background:#bcbcbc"></div>
<svg class="a" style="left:2px;top:619px" width="8" height="9" viewBox="0 0 8 9"><path d="M6.5 1 L2.5 4.5 L6.5 8Z" fill="#a5a5a5"/></svg>
<svg class="a" style="left:276px;top:619px" width="8" height="9" viewBox="0 0 8 9"><path d="M1.5 1 L6 4.5 L1.5 8Z" fill="#9a9a9a"/></svg>
<svg class="a" style="left:22px;top:653px" width="22" height="22" viewBox="0 0 22 22" fill="none" stroke="#3793f1" stroke-width="1.8"><circle cx="11" cy="11" r="9"/><path d="M6.3 10.6 L10 14.1 L15.3 7.9" stroke-width="2.1"/></svg>
<div class="t" style="left:53px;top:648px;font-size:13.5px;color:#333b48">Analyse terminée</div>
<div class="t" style="left:53px;top:667px;font-size:13.6px;color:#7d8898">Trouvés: 69251 fichiers (60.42 GB) / 4 fichier(s) a(ont) été sélectionné(s) ( 247.80 MB)</div>
<div class="a" style="left:828px;top:643px;width:142px;height:40px;background:#3593f2"></div>
<svg class="a" style="left:836px;top:652px" width="22" height="22" viewBox="0 0 22 22" fill="none" stroke="#fff" stroke-width="2"><path d="M8 15.6 A7.3 7.3 0 1 0 6.3 8.3"/><path d="M2.5 7.3 L4.5 10.9 L8.3 9.3" stroke-width="1.9" stroke-linejoin="round"/><path d="M12.4 6.4 V10.6 L14.8 13.5"/></svg>
<div class="t" style="left:866px;top:654px;font-size:19px;font-weight:bold;color:#fff">Récupérer</div>
</body></html>
